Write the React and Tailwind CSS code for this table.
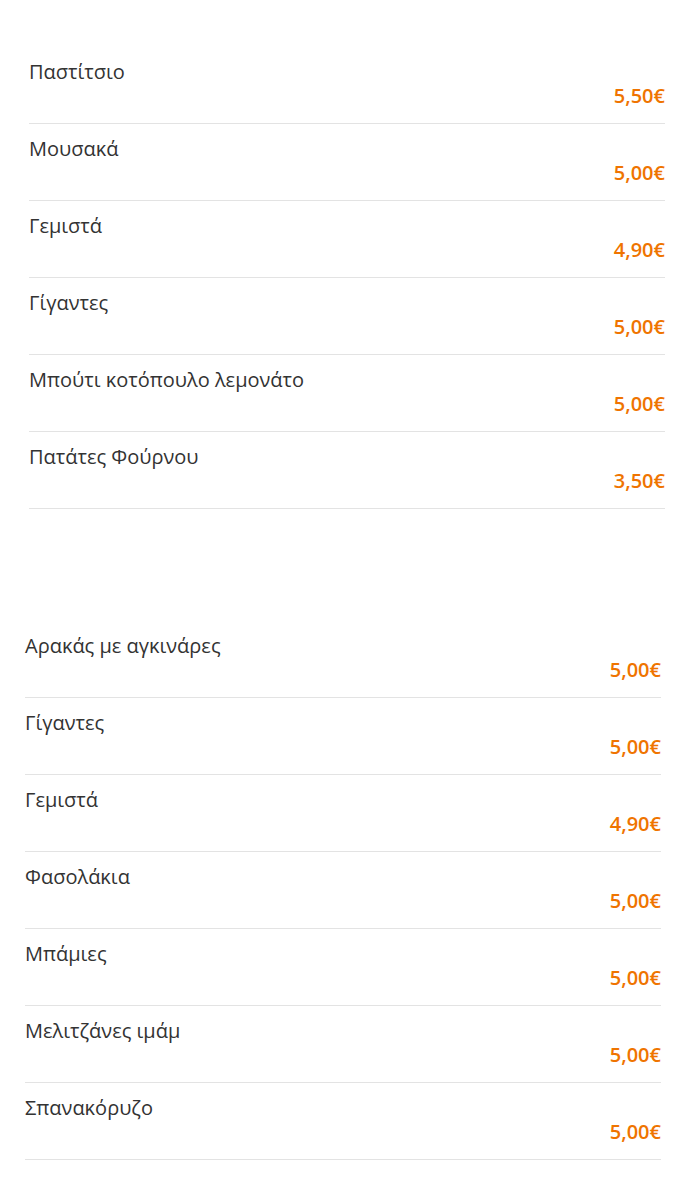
import React from "react";

const s1 = [
  ["Παστίτσιο", "5,50€"],
  ["Μουσακά", "5,00€"],
  ["Γεμιστά", "4,90€"],
  ["Γίγαντες", "5,00€"],
  ["Μπούτι κοτόπουλο λεμονάτο", "5,00€"],
  ["Πατάτες Φούρνου", "3,50€"],
];
const s2 = [
  ["Αρακάς με αγκινάρες", "5,00€"],
  ["Γίγαντες", "5,00€"],
  ["Γεμιστά", "4,90€"],
  ["Φασολάκια", "5,00€"],
  ["Μπάμιες", "5,00€"],
  ["Μελιτζάνες ιμάμ", "5,00€"],
  ["Σπανακόρυζο", "5,00€"],
];

function Row({ name, price }) {
  return (
    <div className="border-b border-[#e3e3e3] pt-[13px] pb-[15px]">
      <div className="h-[24px] leading-[24px] text-[20px] text-[#333333]">{name}</div>
      <div className="h-[24px] leading-[24px] text-[20px] text-right font-semibold text-[#ef7400]">{price}</div>
    </div>
  );
}

export default function App() {
  return (
    <div className="w-[700px] h-[1200px] bg-white" style={{ fontFamily: '"Open Sans", sans-serif' }}>
      <div className="pt-[47px] pl-[29px] w-[665px]">
        {s1.map(([n, p], i) => <Row key={i} name={n} price={p} />)}
      </div>
      <div className="pt-[112px] pl-[25px] w-[661px]">
        {s2.map(([n, p], i) => <Row key={i} name={n} price={p} />)}
      </div>
    </div>
  );
}
